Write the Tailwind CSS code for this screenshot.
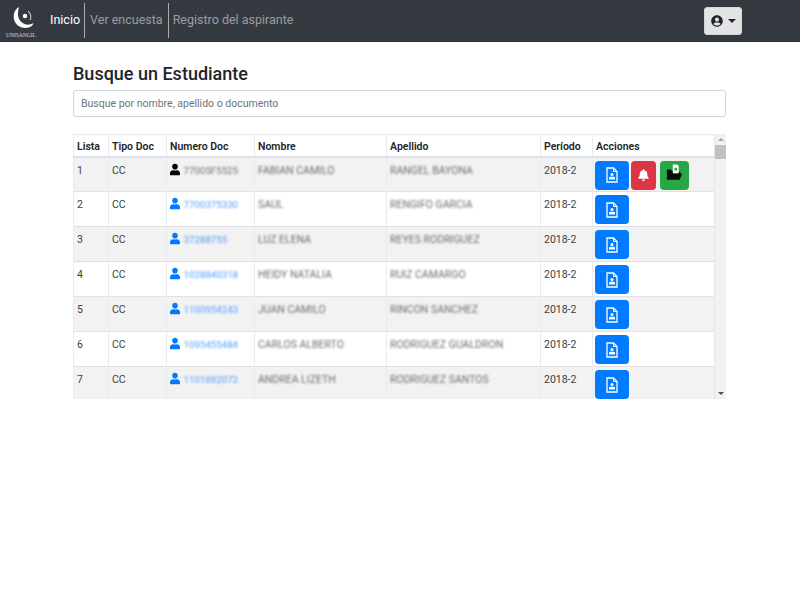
<!DOCTYPE html>
<html lang="es">
<head>
<meta charset="utf-8">
<script src="https://cdn.jsdelivr.net/npm/@tailwindcss/browser@4"></script>
<title>Busque un Estudiante</title>
</head>
<body class="bg-white font-['Roboto','Noto_Sans',sans-serif] text-[#212529] h-[600px] overflow-hidden">
<svg width="0" height="0" class="absolute">
  <defs>
    <symbol id="user" viewBox="0 0 448 512"><path fill="currentColor" d="M224 256c70.700 0 128-57.300 128-128S294.700 0 224 0 96 57.300 96 128s57.300 128 128 128zm89.600 32h-16.700c-22.200 10.200-46.900 16-72.900 16s-50.600-5.800-72.900-16h-16.700C60.200 288 0 348.200 0 422.400V464c0 26.500 21.500 48 48 48h352c26.500 0 48-21.500 48-48v-41.600c0-74.200-60.200-134.400-134.400-134.400z"/></symbol>
    <symbol id="doc" viewBox="0 0 12 16"><path fill="none" stroke="currentColor" stroke-width="1.300" d="M1 1h6.500L11 4.500V15H1z"/><path fill="none" stroke="currentColor" stroke-width="1" d="M7.500 1v3.500H11"/><circle cx="6" cy="7.500" r="1.500" fill="currentColor"/><path fill="currentColor" d="M3 12.500h6v-1.500c0-.8-.8-1.300-1.500-1.300h-3C3.800 9.700 3 10.200 3 11z"/></symbol>
  </defs>
</svg>

<nav class="h-[42px] bg-[#343a40] flex items-center pl-[3px] pr-[58px] border-b border-[#2b3036]">
  <div class="w-[36px] h-[38px] flex flex-col items-center shrink-0">
    <svg viewBox="0 0 36 30" class="w-[36px] h-[30px]">
      <path fill="#fff" d="M16 5C10.500 8 9.500 15 12 20c2.500 5 9 7.500 15 5 2-.8 3-2.300 3.500-4-3 1.800-6.500 2.200-9.500.8C16.500 19.500 14.500 15 15 10.500c.2-2 .6-4 1-5.500z"/>
      <circle cx="22" cy="14" r="2.200" fill="#fff"/>
      <path fill="none" stroke="#fff" stroke-width=".9" d="M25 9c2.800 2.500 3.500 6 2 9"/>
    </svg>
    <span class="text-[5.500px] leading-[7px] text-[#d8dadc] font-['Liberation_Serif',serif]">UNISANGIL</span>
  </div>
  <ul class="flex items-center ml-[11px] text-[12.500px]">
    <li class="text-white pr-[4px] h-[35px] flex items-center border-r border-[#a9adb0]">Inicio</li>
    <li class="text-[#9a9da0] px-[5px] h-[35px] flex items-center border-r border-[#a9adb0]">Ver encuesta</li>
    <li class="text-[#9a9da0] pl-[4px] h-[35px] flex items-center">Registro del aspirante</li>
  </ul>
  <button class="ml-auto w-[38px] h-[28px] bg-[#e2e3e4] rounded-[3px] flex items-center justify-center gap-[5px] text-[#212529] border border-[#d5d6d7]">
    <svg viewBox="0 0 496 512" class="w-[12px] h-[12px]"><path fill="currentColor" d="M248 8C111 8 0 119 0 256s111 248 248 248 248-111 248-248S385 8 248 8zm0 96c48.600 0 88 39.400 88 88s-39.400 88-88 88-88-39.400-88-88 39.400-88 88-88zm0 344c-58.700 0-111.300-26.600-146.500-68.200 18.800-35.400 55.600-59.800 98.500-59.800 2.400 0 4.800.4 7.100 1.100 13 4.200 26.600 6.900 40.900 6.900 14.300 0 28-2.700 40.900-6.900 2.300-.7 4.700-1.100 7.100-1.100 42.900 0 79.700 24.400 98.500 59.800C359.300 421.400 306.700 448 248 448z"/></svg>
    <span class="w-0 h-0 border-x-[4px] border-x-transparent border-t-[4px] border-t-[#212529]"></span>
  </button>
</nav>

<main class="w-[653px] ml-[73px]">
  <h1 class="text-[18px] leading-[24px] font-medium mt-[20px] text-[#212529]">Busque un Estudiante</h1>
  <input type="text" placeholder="Busque por nombre, apellido o documento" class="block w-full h-[27px] mt-[4px] px-[7px] text-[10.500px] border border-[#ced4da] rounded-[3px] placeholder:text-[#6c757d] outline-none">

  <div class="flex mt-[17px] h-[265px] overflow-hidden">
    <div class="w-[641px] shrink-0 overflow-hidden">
      <table class="table-fixed border-collapse w-[641px] text-[10.500px] leading-[14px]">
        <colgroup>
          <col class="w-[35px]"><col class="w-[58px]"><col class="w-[88px]"><col class="w-[132px]"><col class="w-[154px]"><col class="w-[52px]"><col class="w-[122px]">
        </colgroup>
        <thead>
          <tr class="h-[22px] text-left border-b-2 border-[#dee2e6] border-t border-t-[#e9ecef]">
            <th class="border-x border-[#e9ecef] pl-[3px] pt-[3px] font-semibold">Lista</th>
            <th class="border-x border-[#e9ecef] pl-[3px] pt-[3px] font-semibold">Tipo Doc</th>
            <th class="border-x border-[#e9ecef] pl-[3px] pt-[3px] font-semibold">Numero Doc</th>
            <th class="border-x border-[#e9ecef] pl-[3px] pt-[3px] font-semibold">Nombre</th>
            <th class="border-x border-[#e9ecef] pl-[3px] pt-[3px] font-semibold">Apellido</th>
            <th class="border-x border-[#e9ecef] pl-[3px] pt-[3px] font-semibold">Período</th>
            <th class="border-x border-[#e9ecef] pl-[3px] pt-[3px] font-semibold">Acciones</th>
          </tr>
        </thead>
        <tbody class="text-[#3c4045]">
          <tr class="h-[35px] bg-[#f2f2f2] border-b border-[#dee2e6] align-top">
            <td class="border-x border-[#e9ecef] pl-[3px] pt-[6px]">1</td>
            <td class="border-x border-[#e9ecef] pl-[3px] pt-[6px]">CC</td>
            <td class="border-x border-[#e9ecef] pl-[3px] pt-[5px] whitespace-nowrap"><svg class="inline-block w-[10px] h-[13px] align-[-2px] text-black"><use href="#user"/></svg> <span class="ml-[1px] text-[9.700px] blur-[1.300px] text-[#6e6e70]">77005F5525</span></td>
            <td class="border-x border-[#e9ecef] pl-[3px] pt-[6px]"><span class="blur-[1.300px] text-[#6e6e70]">FABIAN CAMILO</span></td>
            <td class="border-x border-[#e9ecef] pl-[3px] pt-[6px]"><span class="blur-[1.300px] text-[#6e6e70]">RANGEL BAYONA</span></td>
            <td class="border-x border-[#e9ecef] pl-[3px] pt-[6px]">2018-2</td>
            <td class="border-x border-[#e9ecef] pl-[2px] pt-[3px]"><div class="flex gap-[2px]">
              <button class="w-[34px] h-[29px] rounded-[4px] bg-[#007bff] text-white flex items-center justify-center"><svg class="w-[12px] h-[16px]"><use href="#doc"/></svg></button>
              <button class="w-[25px] h-[29px] rounded-[4px] bg-[#dc3545] text-white flex items-center justify-center"><svg viewBox="0 0 448 512" class="w-[11px] h-[12px]"><path fill="currentColor" d="M224 512c35.300 0 64-28.700 64-64H160c0 35.300 28.700 64 64 64zm215.400-149.700c-19.300-20.800-55.500-52-55.500-154.300 0-77.700-54.500-139.900-127.900-155.200V32c0-17.700-14.300-32-32-32s-32 14.300-32 32v20.800C118.600 68.100 64.100 130.300 64.100 208c0 102.300-36.200 133.500-55.500 154.300-6 6.400-8.700 14.100-8.600 21.700.1 16.400 13 32 32.100 32h383.800c19.100 0 32-15.600 32.100-32 .1-7.600-2.600-15.300-8.600-21.700z"/></svg></button>
              <button class="w-[29px] h-[29px] rounded-[4px] bg-[#28a745] ml-[2px] flex items-center justify-center"><svg viewBox="0 0 20 19" class="w-[17px] h-[17px] -mt-[5px]"><path fill="#fff" d="M8 0h5l2 2v8H8z"/><path fill="#28a745" d="M10 4h3v3h-3z"/><path fill="#0b0f0c" d="M1 6h5l1 2h1v3h7V9h2v2h2l-3 7H1z"/></svg></button>
            </div></td>
          </tr>
          <tr class="h-[35px] bg-white border-b border-[#dee2e6] align-top">
            <td class="border-x border-[#e9ecef] pl-[3px] pt-[6px]">2</td>
            <td class="border-x border-[#e9ecef] pl-[3px] pt-[6px]">CC</td>
            <td class="border-x border-[#e9ecef] pl-[3px] pt-[5px] whitespace-nowrap"><svg class="inline-block w-[10px] h-[13px] align-[-2px] text-[#007bff]"><use href="#user"/></svg> <span class="ml-[1px] text-[9.700px] blur-[1.100px] text-[#4f9dff]">7700375330</span></td>
            <td class="border-x border-[#e9ecef] pl-[3px] pt-[6px]"><span class="blur-[1.300px] text-[#6e6e70]">SAUL</span></td>
            <td class="border-x border-[#e9ecef] pl-[3px] pt-[6px]"><span class="blur-[1.300px] text-[#6e6e70]">RENGIFO GARCIA</span></td>
            <td class="border-x border-[#e9ecef] pl-[3px] pt-[6px]">2018-2</td>
            <td class="border-x border-[#e9ecef] pl-[2px] pt-[3px]"><button class="w-[34px] h-[29px] rounded-[4px] bg-[#007bff] text-white flex items-center justify-center"><svg class="w-[12px] h-[16px]"><use href="#doc"/></svg></button></td>
          </tr>
          <tr class="h-[35px] bg-[#f2f2f2] border-b border-[#dee2e6] align-top">
            <td class="border-x border-[#e9ecef] pl-[3px] pt-[6px]">3</td>
            <td class="border-x border-[#e9ecef] pl-[3px] pt-[6px]">CC</td>
            <td class="border-x border-[#e9ecef] pl-[3px] pt-[5px] whitespace-nowrap"><svg class="inline-block w-[10px] h-[13px] align-[-2px] text-[#007bff]"><use href="#user"/></svg> <span class="ml-[1px] text-[9.700px] blur-[1.100px] text-[#4f9dff]">37288755</span></td>
            <td class="border-x border-[#e9ecef] pl-[3px] pt-[6px]"><span class="blur-[1.300px] text-[#6e6e70]">LUZ ELENA</span></td>
            <td class="border-x border-[#e9ecef] pl-[3px] pt-[6px]"><span class="blur-[1.300px] text-[#6e6e70]">REYES RODRIGUEZ</span></td>
            <td class="border-x border-[#e9ecef] pl-[3px] pt-[6px]">2018-2</td>
            <td class="border-x border-[#e9ecef] pl-[2px] pt-[3px]"><button class="w-[34px] h-[29px] rounded-[4px] bg-[#007bff] text-white flex items-center justify-center"><svg class="w-[12px] h-[16px]"><use href="#doc"/></svg></button></td>
          </tr>
          <tr class="h-[35px] bg-white border-b border-[#dee2e6] align-top">
            <td class="border-x border-[#e9ecef] pl-[3px] pt-[6px]">4</td>
            <td class="border-x border-[#e9ecef] pl-[3px] pt-[6px]">CC</td>
            <td class="border-x border-[#e9ecef] pl-[3px] pt-[5px] whitespace-nowrap"><svg class="inline-block w-[10px] h-[13px] align-[-2px] text-[#007bff]"><use href="#user"/></svg> <span class="ml-[1px] text-[9.700px] blur-[1.100px] text-[#4f9dff]">1028840318</span></td>
            <td class="border-x border-[#e9ecef] pl-[3px] pt-[6px]"><span class="blur-[1.300px] text-[#6e6e70]">HEIDY NATALIA</span></td>
            <td class="border-x border-[#e9ecef] pl-[3px] pt-[6px]"><span class="blur-[1.300px] text-[#6e6e70]">RUIZ CAMARGO</span></td>
            <td class="border-x border-[#e9ecef] pl-[3px] pt-[6px]">2018-2</td>
            <td class="border-x border-[#e9ecef] pl-[2px] pt-[3px]"><button class="w-[34px] h-[29px] rounded-[4px] bg-[#007bff] text-white flex items-center justify-center"><svg class="w-[12px] h-[16px]"><use href="#doc"/></svg></button></td>
          </tr>
          <tr class="h-[35px] bg-[#f2f2f2] border-b border-[#dee2e6] align-top">
            <td class="border-x border-[#e9ecef] pl-[3px] pt-[6px]">5</td>
            <td class="border-x border-[#e9ecef] pl-[3px] pt-[6px]">CC</td>
            <td class="border-x border-[#e9ecef] pl-[3px] pt-[5px] whitespace-nowrap"><svg class="inline-block w-[10px] h-[13px] align-[-2px] text-[#007bff]"><use href="#user"/></svg> <span class="ml-[1px] text-[9.700px] blur-[1.100px] text-[#4f9dff]">1100954243</span></td>
            <td class="border-x border-[#e9ecef] pl-[3px] pt-[6px]"><span class="blur-[1.300px] text-[#6e6e70]">JUAN CAMILO</span></td>
            <td class="border-x border-[#e9ecef] pl-[3px] pt-[6px]"><span class="blur-[1.300px] text-[#6e6e70]">RINCON SANCHEZ</span></td>
            <td class="border-x border-[#e9ecef] pl-[3px] pt-[6px]">2018-2</td>
            <td class="border-x border-[#e9ecef] pl-[2px] pt-[3px]"><button class="w-[34px] h-[29px] rounded-[4px] bg-[#007bff] text-white flex items-center justify-center"><svg class="w-[12px] h-[16px]"><use href="#doc"/></svg></button></td>
          </tr>
          <tr class="h-[35px] bg-white border-b border-[#dee2e6] align-top">
            <td class="border-x border-[#e9ecef] pl-[3px] pt-[6px]">6</td>
            <td class="border-x border-[#e9ecef] pl-[3px] pt-[6px]">CC</td>
            <td class="border-x border-[#e9ecef] pl-[3px] pt-[5px] whitespace-nowrap"><svg class="inline-block w-[10px] h-[13px] align-[-2px] text-[#007bff]"><use href="#user"/></svg> <span class="ml-[1px] text-[9.700px] blur-[1.100px] text-[#4f9dff]">1095455484</span></td>
            <td class="border-x border-[#e9ecef] pl-[3px] pt-[6px]"><span class="blur-[1.300px] text-[#6e6e70]">CARLOS ALBERTO</span></td>
            <td class="border-x border-[#e9ecef] pl-[3px] pt-[6px]"><span class="blur-[1.300px] text-[#6e6e70]">RODRIGUEZ GUALDRON</span></td>
            <td class="border-x border-[#e9ecef] pl-[3px] pt-[6px]">2018-2</td>
            <td class="border-x border-[#e9ecef] pl-[2px] pt-[3px]"><button class="w-[34px] h-[29px] rounded-[4px] bg-[#007bff] text-white flex items-center justify-center"><svg class="w-[12px] h-[16px]"><use href="#doc"/></svg></button></td>
          </tr>
          <tr class="h-[35px] bg-[#f2f2f2] align-top">
            <td class="border-x border-[#e9ecef] pl-[3px] pt-[6px]">7</td>
            <td class="border-x border-[#e9ecef] pl-[3px] pt-[6px]">CC</td>
            <td class="border-x border-[#e9ecef] pl-[3px] pt-[5px] whitespace-nowrap"><svg class="inline-block w-[10px] h-[13px] align-[-2px] text-[#007bff]"><use href="#user"/></svg> <span class="ml-[1px] text-[9.700px] blur-[1.100px] text-[#4f9dff]">1101692072</span></td>
            <td class="border-x border-[#e9ecef] pl-[3px] pt-[6px]"><span class="blur-[1.300px] text-[#6e6e70]">ANDREA LIZETH</span></td>
            <td class="border-x border-[#e9ecef] pl-[3px] pt-[6px]"><span class="blur-[1.300px] text-[#6e6e70]">RODRIGUEZ SANTOS</span></td>
            <td class="border-x border-[#e9ecef] pl-[3px] pt-[6px]">2018-2</td>
            <td class="border-x border-[#e9ecef] pl-[2px] pt-[3px]"><button class="w-[34px] h-[29px] rounded-[4px] bg-[#007bff] text-white flex items-center justify-center"><svg class="w-[12px] h-[16px]"><use href="#doc"/></svg></button></td>
          </tr>
        </tbody>
      </table>
    </div>
    <div class="w-[12px] shrink-0 bg-[#f1f1f1] flex flex-col items-center border-l border-[#e6e6e6]">
      <div class="h-[11px] w-full flex items-center justify-center"><span class="w-0 h-0 border-x-[3px] border-x-transparent border-b-[3px] border-b-[#a3a3a3]"></span></div>
      <div class="w-full h-[14px] bg-[#c1c1c1]"></div>
      <div class="mt-auto h-[11px] w-full flex items-center justify-center"><span class="w-0 h-0 border-x-[3px] border-x-transparent border-t-[3px] border-t-[#505050]"></span></div>
    </div>
  </div>
</main>
</body>
</html>
